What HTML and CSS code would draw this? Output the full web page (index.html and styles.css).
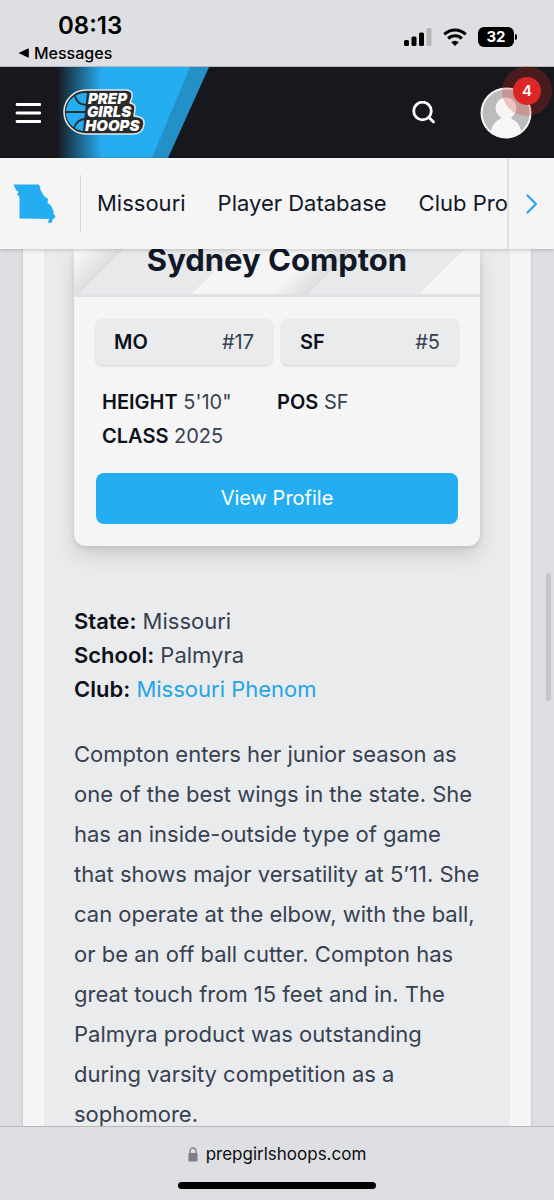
FILE: index.html
```html
<!DOCTYPE html>
<html lang="en">
  <head>
    <meta charset="UTF-8" />
    <meta name="viewport" content="width=device-width, initial-scale=1.0" />
    <title>Prep Girls Hoops</title>
    <link rel="stylesheet" href="styles.css">
  </head>
  <body>
    <!-- Phone status bar -->
    <div class="status">
      <div class="status-left">
        <span class="time">08:13</span>
        <a class="back" href="#">
          <svg width="11" height="10" viewBox="0 0 11 10"><path d="M0.500 5 L10 0.500 Q10.800 0.300 10.800 1 V9 Q10.800 9.700 10 9.500 Z"/></svg>
          Messages
        </a>
      </div>
      <div class="status-icons">
        <svg width="28" height="18" viewBox="0 0 28 18">
          <rect x="0" y="12" width="5" height="6" rx="1.5"/>
          <rect x="7.500" y="8.500" width="5" height="9.500" rx="1.500"/>
          <rect x="15" y="4.500" width="5" height="13.500" rx="1.500"/>
          <rect x="22.500" y="0" width="5" height="18" rx="1.500" fill="#b5b5b8"/>
        </svg>
        <svg width="24" height="18" viewBox="0 0 24 18">
          <g fill="none" stroke="#000" stroke-width="3.200">
            <path d="M1.300 6.300 A15.500 15.500 0 0 1 22.700 6.300"/>
            <path d="M5.200 10.500 A9.800 9.800 0 0 1 18.800 10.500"/>
          </g>
          <path d="M12 18 L8.200 14.200 A5.500 5.500 0 0 1 15.800 14.200 Z"/>
        </svg>
        <span class="battery">32</span>
      </div>
    </div>

    <!-- Site header -->
    <header class="header">
      <button class="icon-btn menu-btn" aria-label="Menu">
        <svg width="26" height="22" viewBox="0 0 26 22"><path d="M2 2.500 H25 M2 11 H25 M2 19.500 H25" stroke="#fff" stroke-width="2.800" stroke-linecap="round"/></svg>
      </button>
      <a class="logo" href="#" aria-label="Prep Girls Hoops">
        <svg width="152" height="91" viewBox="0 0 152 91">
          <defs>
            <linearGradient id="fade" x1="0" x2="1">
              <stop offset="0" stop-color="#17181d"/>
              <stop offset="1" stop-color="#25adf2"/>
            </linearGradient>
          </defs>
          <path d="M44 0 H152 L111 91 H44 Z" fill="#2390c8"/>
          <path d="M44 0 H133 L95 91 H44 Z" fill="#25adf2"/>
          <rect width="45" height="91" fill="url(#fade)"/>
          <g stroke-linejoin="round">
            <path d="M29 23 H70 Q76 24 75 30 L73 36 Q79 37 78 42 L77 49 Q88 50 87 57 Q86 67 76 67 H29 A22 22 0 0 1 29 23 Z" fill="#292b2d" stroke="#e9e9e9" stroke-width="1.500"/>
            <path d="M30 26 L26 64 A19 19 0 0 1 30 26 Z" fill="#25adf2"/>
            <path d="M9 45 H30 M18 29 Q20 38 30 38 M17 61 Q20 52 29 52" fill="none" stroke="#292b2d" stroke-width="1.800"/>
          </g>
          <g class="logo-text">
            <text x="31" y="37">PREP</text>
            <text x="30" y="50">GIRLS</text>
            <text x="28" y="64">HOOPS</text>
          </g>
        </svg>
      </a>
      <button class="icon-btn search-btn" aria-label="Search">
        <svg width="24" height="24" viewBox="0 0 24 24"><g fill="none" stroke="#fff" stroke-width="2.800" stroke-linecap="round"><circle cx="10.500" cy="10" r="8.800"/><path d="M17 16.500 L21.500 21"/></g></svg>
      </button>
      <button class="icon-btn avatar-btn" aria-label="Account">
        <svg width="52" height="52" viewBox="0 0 52 52">
          <defs><clipPath id="round"><circle cx="26" cy="26" r="25"/></clipPath></defs>
          <circle cx="26" cy="26" r="25.500" fill="#f6f6f6"/>
          <circle cx="26" cy="26" r="23.500" fill="#bcbcbc"/>
          <g fill="#f6f6f6" clip-path="url(#round)">
            <circle cx="26" cy="21" r="10.500"/>
            <path d="M21 29 H31 Q31 32 34 33 Q41 37 43 52 H9 Q11 37 18 33 Q21 32 21 29 Z"/>
          </g>
        </svg>
        <span class="badge">4</span>
      </button>
    </header>

    <!-- State nav -->
    <nav class="nav">
      <a class="state" href="#" aria-label="Missouri home">
        <svg width="43" height="40" viewBox="0 0 43 40"><path d="M0.500 0.500 L25.500 0.500 L27.500 3 L27 5 L31 12 L35 15 L34.500 19 L38 21.500 L40.500 27 L40.500 30 L42.500 32 L41 35 L40 34.500 L38.500 39 L34.500 38.500 L36.500 35 L6.500 34.500 L6.500 13 L4 10.500 L5.500 8 L3 6 Z" fill="#25adf2"/></svg>
      </a>
      <div class="nav-links">
        <a href="#">Missouri</a>
        <a href="#">Player Database</a>
        <a href="#">Club Pro</a>
      </div>
      <button class="icon-btn next-btn" aria-label="More">
        <svg width="12" height="20" viewBox="0 0 12 20"><path d="M1.500 1.500 L10 10 L1.500 18.500" fill="none" stroke="#25a4e6" stroke-width="2.200" stroke-linecap="round" stroke-linejoin="round"/></svg>
      </button>
    </nav>

    <!-- Article -->
    <main class="main">
      <div class="wrapper">
        <article class="article">
          <section class="card">
            <h2 class="card-title">Sydney Compton</h2>
            <div class="card-body">
              <div class="ranks">
                <div class="rank"><strong>MO</strong><span>#17</span></div>
                <div class="rank"><strong>SF</strong><span>#5</span></div>
              </div>
              <div class="stats">
                <div><strong>HEIGHT</strong> 5'10"</div>
                <div><strong>POS</strong> SF</div>
                <div><strong>CLASS</strong> 2025</div>
              </div>
              <a class="profile-btn" href="#">View Profile</a>
            </div>
          </section>

          <p class="info">
            <strong>State:</strong> Missouri<br>
            <strong>School:</strong> Palmyra<br>
            <strong>Club:</strong> <a href="#">Missouri Phenom</a>
          </p>
          <p class="text">Compton enters her junior season as one of the best wings in the state. She has an inside-outside type of game that shows major versatility at 5’11. She can operate at the elbow, with the ball, or be an off ball cutter. Compton has great touch from 15 feet and in. The Palmyra product was outstanding during varsity competition as a sophomore.</p>
        </article>
      </div>
      <div class="scrollbar"></div>
    </main>

    <!-- Browser address bar -->
    <footer class="address">
      <div class="url">
        <svg width="10" height="15" viewBox="0 0 10 15"><rect x="0.500" y="6" width="9" height="8.500" rx="1.300" fill="#7d7d82"/><path d="M2 7 V4 A3 3 0 0 1 8 4 V7" fill="none" stroke="#7d7d82" stroke-width="1.300"/></svg>
        prepgirlshoops.com
      </div>
      <div class="home-bar"></div>
    </footer>
  </body>
</html>
```

FILE: styles.css
```css
* {
  box-sizing: border-box;
}

body {
  margin: 0;
  height: 100vh;
  display: flex;
  flex-direction: column;
  overflow: hidden;
  font-family: Inter, "Liberation Sans", sans-serif;
  font-size: 22px;
  color: #374151;
  background-color: #dedfe3;
}

a {
  color: inherit;
  text-decoration: none;
}

svg {
  display: block;
}

strong {
  font-weight: 600;
  color: #0d111c;
}

.icon-btn {
  padding: 0;
  border: none;
  background: none;
  cursor: pointer;
}

/* Status bar */
.status {
  display: flex;
  justify-content: space-between;
  align-items: flex-start;
  height: 67px;
  padding: 12px 40px 0 18px;
  color: #000;
  border-bottom: 1px solid #b5b9be;
}

.time {
  display: block;
  padding-left: 40px;
  font-size: 24px;
  line-height: 28px;
  font-weight: 600;
}

.back {
  display: flex;
  align-items: center;
  gap: 5px;
  font-size: 16px;
  line-height: 26px;
  font-weight: 500;
}

.status-icons {
  display: flex;
  align-items: center;
  gap: 11px;
  padding-top: 15px;
}

.battery {
  position: relative;
  width: 36px;
  border-radius: 6px;
  background-color: #000;
  color: #fff;
  font-size: 15px;
  line-height: 20px;
  font-weight: 700;
  text-align: center;
}

.battery::after {
  content: "";
  position: absolute;
  top: 7px;
  right: -3px;
  width: 2px;
  height: 6px;
  border-radius: 0 2px 2px 0;
  background-color: #000;
}

/* Header */
.header {
  display: flex;
  align-items: center;
  height: 91px;
  flex-shrink: 0;
  padding: 0 22px 0 15px;
  background-color: #17181d;
}

.logo {
  margin-left: 16px;
}

.logo-text {
  font-size: 15px;
  font-weight: 900;
  font-style: italic;
  fill: #fff;
}

.search-btn {
  margin-left: auto;
}

.avatar-btn {
  position: relative;
  margin-left: 44px;
}

.badge {
  position: absolute;
  top: -10px;
  right: -9px;
  width: 28px;
  border-radius: 50%;
  background-color: #dc2626;
  box-shadow: 0 0 0 11px rgba(220, 38, 38, 0.25);
  color: #fff;
  font-family: Inter, sans-serif;
  font-size: 15px;
  line-height: 28px;
  font-weight: 600;
}

/* State nav */
.nav {
  position: relative;
  z-index: 1;
  display: flex;
  align-items: center;
  height: 91px;
  flex-shrink: 0;
  background-color: #f5f5f5;
  box-shadow: 0 1px 4px rgba(0, 0, 0, 0.2);
}

.state {
  display: flex;
  align-items: center;
  height: 57px;
  padding: 0 24px 0 13px;
  border-right: 1px solid #d5d7da;
}

.nav-links {
  flex: 1;
  display: flex;
  gap: 32px;
  padding: 0 0 2px 16px;
  overflow: hidden;
  white-space: nowrap;
  color: #111827;
}

.next-btn {
  display: flex;
  align-items: center;
  justify-content: center;
  width: 47px;
  height: 91px;
  border-left: 2px solid #dfe0e4;
}

/* Article */
.main {
  position: relative;
  flex: 1;
  overflow: hidden;
}

.wrapper {
  margin: 0 23px;
  padding: 0 21px;
  background-color: #f5f5f5;
  box-shadow: 0 0 3px rgba(0, 0, 0, 0.15);
}

.article {
  padding: 0 30px 40px;
  background-color: #eaebed;
}

.card {
  border-radius: 0 0 12px 12px;
  background-color: #f5f5f5;
  box-shadow: 0 10px 20px rgba(0, 0, 0, 0.12), 0 2px 6px rgba(0, 0, 0, 0.1);
}

.card-title {
  margin: 0;
  padding-bottom: 23px;
  border-bottom: 3px solid #dfe1e4;
  font-size: 31px;
  line-height: 22px;
  font-weight: 700;
  text-align: center;
  color: #111827;
  /* diagonal stripes */
  background: linear-gradient(135deg, #f5f5f5 8px, #dcdddf 35px, #e8e9eb 35px, #e8e9eb 115px, #f5f5f5 115px, #f5f5f5 170px, #dcdddf 197px, #e8e9eb 197px, #e8e9eb 276px, #f5f5f5 276px);
}

.card-body {
  padding: 22px;
}

.ranks {
  display: grid;
  grid-template-columns: 1fr 1fr;
  gap: 10px;
  font-size: 20px;
}

.rank {
  display: flex;
  justify-content: space-between;
  padding: 0 18px;
  line-height: 46px;
  border-radius: 6px;
  background-color: #eaebed;
  box-shadow: 0 1px 3px rgba(0, 0, 0, 0.15);
}

.stats {
  display: grid;
  grid-template-columns: 1fr 1fr;
  padding: 20px 6px;
  font-size: 20px;
  line-height: 34px;
}

.profile-btn {
  display: block;
  border-radius: 8px;
  background-color: #25adf2;
  color: #fff;
  font-size: 20px;
  line-height: 51px;
  text-align: center;
}

.info {
  margin: 58px 0 28px;
  line-height: 34px;
}

.info a {
  color: #25a4e6;
}

.text {
  margin: 0;
  line-height: 40px;
}

.scrollbar {
  position: absolute;
  top: 324px;
  right: 3px;
  width: 5px;
  height: 128px;
  border-radius: 3px;
  background-color: #c5c6ca;
}

/* Address bar */
.address {
  height: 74px;
  flex-shrink: 0;
  padding-top: 14px;
  border-top: 1px solid #b5b6bb;
  background-color: #dedfe3;
  color: #0d0d10;
}

.url {
  display: flex;
  align-items: center;
  justify-content: center;
  gap: 8px;
  font-size: 17px;
  line-height: 26px;
}

.home-bar {
  width: 198px;
  height: 7px;
  margin: 15px auto 0;
  border-radius: 4px;
  background-color: #000;
}
```
